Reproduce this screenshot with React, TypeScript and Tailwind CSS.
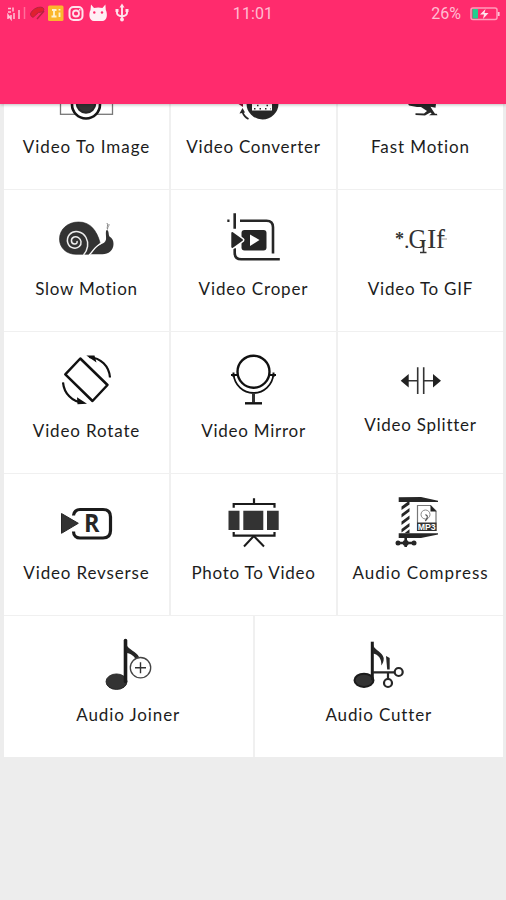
import { ReactNode } from "react";

const INK = "#262626";

function Icon({ children }: { children: ReactNode }) {
    return (
        <svg width="59" height="60" viewBox="0 0 59 60" fill="none" stroke={INK} strokeWidth="2" className="shrink-0">
            {children}
        </svg>
    );
}

const CameraIcon = () => (
    <Icon>
        <rect x="3.5" y="18" width="52" height="28.3" stroke="#777" strokeWidth="1.3" />
        <circle cx="29" cy="36.5" r="14" fill="#fff" stroke="#161616" strokeWidth="2.6" />
        <circle cx="29" cy="35.5" r="9.3" fill="#333" />
    </Icon>
);

const ConvertIcon = () => (
    <Icon>
        <circle cx="38.5" cy="35.5" r="16" fill={INK} stroke="none" />
        <path d="M28 30h20v12.5H28z" fill="#fff" stroke="none" />
        <path d="M30 40.8h17" strokeWidth="1.4" strokeDasharray="1.5 4" />
        <path d="M33 37.500h12" strokeWidth="1.4" strokeDasharray="1.5 8" />
        <path d="M18.5 44c1 3 3 5.5 6 7" strokeWidth="1.8" />
        <path d="M18.5 40l-3 5.500 5.500-1z" fill={INK} stroke="none" />
        <path d="M13 35l6 4v-4z" fill="#7b1230" stroke="none" />
    </Icon>
);

const RunnerIcon = () => (
    <Icon>
        <path d="M16 34l2 3.500 8 1.500 4 0 6 4-3 2.500-8.500-.2v1.700l9.500.4 5.300-3 1.400 1-2.700 1.800h8.500l-.8-1.500h-1.700l-3-4.500-1.500-2.500 5 1 .5-3.700z" fill={INK} stroke="none" />
    </Icon>
);

const SnailIcon = () => (
    <Icon>
        <path d="M19 44.300C9 44.300 2.500 37.500 2.500 29 2.500 19 11 12 21.500 12 33 12 39.500 20 43 32.500L33 44.300z" fill="#333" stroke="#222" strokeWidth=".6" />
        <path d="M33 44.300c3-1.500 5-7 9.500-9.300 4-1.500 6-3 6.500-5.500.5-3-1-8.500.8-9.500 2.500.5 1.500 5 2.700 6.500 3 1.500 4 4.500 4 7.500 0 6.500-5 10.300-11 10.300z" fill="#333" stroke="none" />
        <path d="M26.500 45c4.500-5 5.500-12 2.500-17.500-3.500-6.500-12-8-16.500-3-4 5-2 12.500 4 13.500 5 .8 8-2.500 7.500-6.500-.5-3.500-4-5.500-7-4.500-3.500 1.500-3.500 6.500.5 7 2 .2 3-1 2.500-3" stroke="#eee" strokeWidth="1.500" />
        <path d="M32 45c3.500-2.500 5-8.500 11.500-11" stroke="#fff" strokeWidth="1.300" />
        <path d="M50.500 19.500c-1-2.500 1-4-.5-6.500M50.500 19c0-2 1.800-3 1.500-5" stroke="#888" strokeWidth="1" />
    </Icon>
);

const CropIcon = () => (
    <Icon>
        <path d="M3.300 10.700h2.200M10.700 3.300v15.500M16 10.700h26.500q6.500 0 6.500 6.500v26.200" strokeWidth="2.600" />
        <path d="M10.700 38.300v4.500q0 6.500 6.500 6.500h38.600" strokeWidth="2.600" />
        <rect x="17.500" y="20" width="25" height="20.500" rx="3" fill={INK} stroke="none" />
        <path d="M8 22.500L18.500 30 8 37.500z" fill={INK} stroke="#fff" strokeWidth="4" strokeLinejoin="round" />
        <path d="M8.300 23L18 30 8.300 37z" fill={INK} strokeLinejoin="round" />
        <path d="M26 24.500l9.500 5.500-9.500 6z" fill="#fff" stroke="none" />
    </Icon>
);

const GifIcon = () => (
    <Icon>
        <g fill="#333" stroke="none" fontFamily="'Liberation Serif', serif">
            <text x="4" y="34.500" fontSize="18" fontWeight="700">*</text>
            <text x="13" y="37.500" fontSize="22">.</text>
            <text x="17.500" y="37.500" fontSize="27" textLength="18" lengthAdjust="spacingAndGlyphs">G</text>
            <text x="36" y="37.500" fontSize="28">I</text>
            <text x="45" y="37.500" fontSize="27">f</text>
        </g>
        <path d="M32.500 30v12.500M29 42.500h6.500" stroke="#333" strokeWidth="1.600" />
        <path d="M50 29h6" stroke="#aaa" strokeWidth="1.200" />
    </Icon>
);

const RotateIcon = () => (
    <Icon>
        <path d="M23.300 6.500L50.500 33 35.500 49 8.300 22.300z" stroke="#111" strokeWidth="2.500" strokeLinejoin="round" />
        <path d="M32 5c12 1 20 9 21 20.500M6 30.300c1 11 9 19.500 20 20.500" stroke="#111" strokeWidth="2.200" />
        <path d="M29.300 3.500h8.200l2 7zM30 51.800l-9.500.5-.5-7z" fill="#111" stroke="none" />
    </Icon>
);

const MirrorIcon = () => (
    <Icon>
        <circle cx="29.500" cy="19.700" r="16" stroke="#111" strokeWidth="2.400" />
        <path d="M9.500 22c1 11 9.500 19 20 19s19-8 20-19" stroke="#111" strokeWidth="1.800" />
        <path d="M7 23h6.500M45.500 23H52M9.500 20.500v4.500M49.500 20.500v4.500" stroke="#111" strokeWidth="2" />
        <path d="M29.500 41v9.500" stroke="#333" strokeWidth="3" />
        <path d="M21 51.300h17" stroke="#111" strokeWidth="2.400" />
    </Icon>
);

const SplitIcon = () => (
    <Icon>
        <path d="M26.700 15.300V42M32.700 15.300V42" stroke="#333" strokeWidth="1.600" />
        <path d="M16 28.700h10.700M32.700 28.700H44" stroke="#333" strokeWidth="1.400" />
        <path d="M9.700 28.700l8-6.700v13.500zM50 28.700L42 22v13.500z" fill="#222" stroke="none" />
    </Icon>
);

const ReverseIcon = () => (
    <Icon>
        <path d="M4.500 19.500L21.300 29.300 4.500 39.300z" fill="#333" stroke={INK} strokeWidth="1" />
        <path d="M16.500 21.500c0-3.500 3-6 6.500-6h23q7.500 0 7.500 7.500v13.500q0 7.500-7.500 7.500H23c-3.500 0-6.500-2.500-6.500-6.500" stroke="#1b1b1b" strokeWidth="3.200" />
        <text x="27" y="38.300" fontSize="25" fontWeight="700" fontFamily="'Open Sans', sans-serif" fill={INK} stroke="none" textLength="15.500" lengthAdjust="spacingAndGlyphs">R</text>
    </Icon>
);

const SlidesIcon = () => (
    <Icon>
        <path d="M9.700 13.800V10h40.800v3.800M9.700 38v3.700h40.800V38M30 4.300V10" stroke="#1b1b1b" strokeWidth="2.200" />
        <path d="M4.500 16.700h11V36h-11zM19.300 16.700h20V36h-20zM43 16.700h11.700V36H43z" fill="#333" stroke="none" />
        <path d="M29.800 42l-9.800 10.500M29.800 42l10.200 10.500" stroke="#1b1b1b" strokeWidth="2" />
    </Icon>
);

const CompressIcon = () => (
    <Icon>
        <path d="M7.700 3.300L30 3l17 3.700V8H7.700zM7.700 39.300H47v1.200L30 44H7.700z" fill={INK} stroke="none" />
        <path d="M10.500 12.500v3.500l8-5.500V8h-2zM10.500 20v3.500l8-6V14zM10.500 27.500V31l8-6v-3.500zM10.500 35v3.500l8-6V29zM13.500 39.300l5-4V39.300z" fill={INK} stroke="none" />
        <path d="M14.700 44v9M6.500 49h17" strokeWidth="2.600" />
        <circle cx="7" cy="49" r="2.500" fill={INK} stroke="none" />
        <circle cx="23" cy="49" r="2.500" fill={INK} stroke="none" />
        <circle cx="14.700" cy="49" r="3" fill={INK} stroke="none" />
        <path d="M26.500 11.500h13l5.500 5.500v19.500H26.500z" fill="#fff" stroke="#777" strokeWidth="1.200" />
        <path d="M39.500 11v6.500h6z" fill="#222" stroke="none" />
        <circle cx="34.500" cy="20.500" r="4.500" stroke="#888" strokeWidth="1" />
        <path d="M34.500 20.500l1.800 1.500c.5 2-1 4-2 5" stroke="#555" strokeWidth="1.200" />
        <path d="M26 28.500h19.500V37H26z" fill="#333" stroke="none" />
        <text x="26.700" y="35.900" fontSize="9" fontWeight="700" fontFamily="'Liberation Sans', sans-serif" fill="#fff" stroke="none" textLength="18" lengthAdjust="spacingAndGlyphs">MP3</text>
    </Icon>
);

const JoinIcon = () => (
    <Icon>
        <ellipse cx="17.500" cy="45.700" rx="10.500" ry="7.800" fill="#333" stroke="#1b1b1b" strokeWidth=".8" />
        <path d="M26.500 4.500v41" stroke="#1b1b1b" strokeWidth="3.600" strokeLinecap="round" />
        <path d="M27.500 9c2 4.500 10 6.500 12.500 12l-2 4c-2.500-4.500-6-7.500-10.500-8z" fill={INK} stroke="none" />
        <circle cx="41.500" cy="31.700" r="10.200" fill="#fff" stroke="#444" strokeWidth="1.300" />
        <path d="M36 31.700h11M41.500 26.200v11" stroke="#333" strokeWidth="1.400" />
    </Icon>
);

const CutIcon = () => (
    <Icon>
        <ellipse cx="15" cy="44.300" rx="9.500" ry="6.600" fill="#333" stroke="#1b1b1b" />
        <path d="M23.300 5.700v38.500" stroke="#1b1b1b" strokeWidth="3" />
        <path d="M24 9c2 5.500 9.500 7 10.700 13 .3 3-1 5.500-2.400 7.500.5-7-3-11-8.300-12z" fill={INK} stroke="none" />
        <path d="M37 20l3.700 2v11.500h-2.500z" fill={INK} stroke="none" />
        <path d="M24 36.300h21.500M39 36.300V43" strokeWidth="2.200" />
        <circle cx="49.700" cy="36" r="4" strokeWidth="2.200" />
        <circle cx="39" cy="47" r="4" strokeWidth="2.200" />
    </Icon>
);

type Tool = { label: string; icon: ReactNode; tracking?: string; labelGap?: string };

const tools: Tool[] = [
    { label: "Video To Image", icon: <CameraIcon />, tracking: "tracking-[0.95px]" },
    { label: "Video Converter", icon: <ConvertIcon /> },
    { label: "Fast Motion", icon: <RunnerIcon />, tracking: "tracking-[0.9px]" },
    { label: "Slow Motion", icon: <SnailIcon /> },
    { label: "Video Croper", icon: <CropIcon />, tracking: "tracking-[0.85px]" },
    { label: "Video To GIF", icon: <GifIcon /> },
    { label: "Video Rotate", icon: <RotateIcon />, tracking: "tracking-[0.85px]" },
    { label: "Video Mirror", icon: <MirrorIcon /> },
    { label: "Video Splitter", icon: <SplitIcon />, labelGap: "mt-px" },
    { label: "Video Revserse", icon: <ReverseIcon />, tracking: "tracking-[0.85px]" },
    { label: "Photo To Video", icon: <SlidesIcon /> },
    { label: "Audio Compress", icon: <CompressIcon />, tracking: "tracking-[1px]" },
];

const audioTools: Tool[] = [
    { label: "Audio Joiner", icon: <JoinIcon />, tracking: "tracking-[0.9px]" },
    { label: "Audio Cutter", icon: <CutIcon />, tracking: "tracking-[0.85px]" },
];

function ToolCell({ label, icon, tracking = "tracking-[0.75px]", labelGap = "mt-[7px]" }: Tool) {
    return (
        <div className="flex h-[141px] flex-col items-center bg-white pt-5">
            {icon}
            <span className={`whitespace-nowrap text-[17px] leading-6 text-[#1c1c1c] ${tracking} ${labelGap}`}>{label}</span>
        </div>
    );
}

function StatusBar() {
    return (
        <div className="flex h-[27px] items-center px-[6px] font-['Roboto',sans-serif] text-[16px] text-[#ffbdd2]">
            <div className="flex-1">
                <svg width="126" height="27" viewBox="6 0 126 27" fill="none" stroke="#ffc4d6" strokeWidth="1.500">
                    <path d="M8 8.500h3M8 12h3M13 7.500v4M8 19v-4l3 4v-4M14 19v-6M19 19V10" />
                    <path d="M24.500 7v12" stroke="#ff6f9b" />
                    <path d="M30.500 14c1-4 7-8 12-6.500 2.500 1.500 1 4-1 4.500l-3 .5-4 3.500c-1 2-3.500 1.500-4-2z" fill="#e0202f" stroke="#b5233f" strokeWidth="1" />
                    <path d="M37 19l7-8" stroke="#b5233f" />
                    <rect x="48" y="5.500" width="15.500" height="15.500" rx="1.500" fill="#fbb72c" stroke="none" />
                    <path d="M52 10h4.500M54 10v6M51.500 16.500h5M59.500 12.500v4.500M59.500 9v1.500" stroke="#fff2d0" strokeWidth="1.800" />
                    <rect x="69.500" y="7" width="13" height="13" rx="4" stroke="#ffe3ec" strokeWidth="2" />
                    <circle cx="76" cy="13.500" r="3" stroke="#ffe3ec" strokeWidth="1.800" />
                    <circle cx="79.800" cy="9.800" r=".9" fill="#ffe3ec" stroke="none" />
                    <path d="M91 4.500l3 3.500q4.200-1.200 8.400 0l3-3.500.4 5.500c2 4 1.500 11-3.500 11H94c-5 0-5.500-7-3.500-11z" fill="#fff0f5" stroke="none" />
                    <circle cx="94.300" cy="12.500" r="1.200" fill="#ff2b6d" stroke="none" />
                    <circle cx="102" cy="12.500" r="1.200" fill="#ff2b6d" stroke="none" />
                    <path d="M122 6v14M117 10v3q0 2.500 5 3.500 5-1 5-3.500v-3" stroke="#ffe3ec" strokeWidth="1.900" />
                    <path d="M122 3.500l2.500 4h-5zM115.500 9h3v3h-3zM125.500 9h3v3h-3z" fill="#ffe3ec" stroke="none" />
                    <circle cx="122" cy="19.500" r="1.900" fill="#ffe3ec" stroke="none" />
                </svg>
            </div>
            <span className="tracking-[0.1px]">11:01</span>
            <div className="flex flex-1 items-center justify-end gap-[9px]">
                <span>26%</span>
                <svg width="30" height="14" viewBox="0 0 30 14" fill="none" className="shrink-0">
                    <rect x="1" y="1" width="26" height="11.500" rx="2" stroke="#ff9dbb" strokeWidth="1.500" />
                    <path d="M28.700 5v4" stroke="#ffc4d6" strokeWidth="1.800" />
                    <rect x="2.500" y="2" width="5.500" height="9.500" fill="#22cf8e" />
                    <path d="M15.500 2l-5.500 5.500h4l-1 4.500 5.500-6h-4z" fill="#ffe3ec" />
                </svg>
            </div>
        </div>
    );
}

export default function App() {
    return (
        <div className="flex h-[900px] w-[506px] flex-col overflow-hidden bg-[#ededed] font-['Lato',sans-serif]">
            <header className="relative z-10 h-[104px] shrink-0 bg-[#ff2b6d] shadow-[0_1px_3px_rgba(0,0,0,0.25)]">
                <StatusBar />
            </header>
            <main className="-mt-14 ml-1 mr-[3px] flex flex-col gap-px bg-[#f0f0f0]">
                <div className="grid grid-cols-3 gap-x-[2px] gap-y-px">
                    {tools.map(tool => <ToolCell key={tool.label} {...tool} />)}
                </div>
                <div className="grid grid-cols-2 gap-x-[2px]">
                    {audioTools.map(tool => <ToolCell key={tool.label} {...tool} />)}
                </div>
            </main>
        </div>
    );
}
